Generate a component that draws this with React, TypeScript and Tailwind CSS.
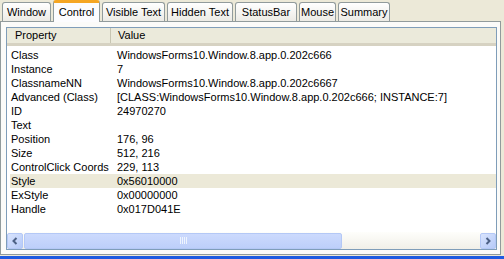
import React from "react";

const tabs: [string, string][] = [
  ["Window", "w-[49px]"],
  ["Control", "w-[47px]"],
  ["Visible Text", "w-[63px]"],
  ["Hidden Text", "w-[66px]"],
  ["StatusBar", "w-[62px]"],
  ["Mouse", "w-[37px]"],
  ["Summary", "w-[52px]"],
];

const rows: [string, string][] = [
  ["Class", "WindowsForms10.Window.8.app.0.202c666"],
  ["Instance", "7"],
  ["ClassnameNN", "WindowsForms10.Window.8.app.0.202c6667"],
  ["Advanced (Class)", "[CLASS:WindowsForms10.Window.8.app.0.202c666; INSTANCE:7]"],
  ["ID", "24970270"],
  ["Text", ""],
  ["Position", "176, 96"],
  ["Size", "512, 216"],
  ["ControlClick Coords", "229, 113"],
  ["Style", "0x56010000"],
  ["ExStyle", "0x00000000"],
  ["Handle", "0x017D041E"],
];

function Arrow({ dir }: { dir: "left" | "right" }) {
  return (
    <div className="w-[16px] h-[16px] rounded-[2px] border border-[#B4C8F6] bg-gradient-to-br from-[#D9E4FD] to-[#B6CAF8] flex items-center justify-center">
      <svg width="8" height="8" viewBox="0 0 8 8" className={dir === "right" ? "rotate-180" : ""}>
        <path d="M5.5 1 L2.5 4 L5.5 7" fill="none" stroke="#4D6185" strokeWidth="2" />
      </svg>
    </div>
  );
}

export default function App() {
  return (
    <div
      className="w-[504px] h-[259px] bg-[#ECE9D8] flex flex-col overflow-hidden text-[11px] text-black"
      style={{ fontFamily: '"Liberation Sans", Arial, sans-serif' }}
    >
      {/* tab strip */}
      <div className="flex items-end h-[21px] pl-[2px] gap-[2px] relative z-10">
        {tabs.map(([t, w]) =>
          t === "Control" ? (
            <div
              key={t}
              className={`${w} h-[22px] -mb-[1px] flex items-center justify-center bg-[#FCFCFE] border border-[#919B9C] border-b-0 border-t-[3px] border-t-[#F5A623] rounded-t-[3px] leading-none whitespace-nowrap`}
            >
              <span className="mt-[-1px]">{t}</span>
            </div>
          ) : (
            <div
              key={t}
              className={`${w} h-[19px] flex items-center justify-center bg-gradient-to-b from-[#FFFFFF] to-[#ECEBE5] border border-[#919B9C] border-b-0 rounded-t-[3px] leading-none whitespace-nowrap`}
            >
              {t}
            </div>
          )
        )}
      </div>

      {/* tab panel */}
      <div className="w-[501px] h-[234px] border border-[#919B9C] bg-[#FBFBF9] pt-[5px] pl-[5px]">
        <div className="w-[491px] h-[223px] border border-[#7F9DB9] bg-white flex flex-col">
          {/* header */}
          <div className="h-[18px] flex bg-[#EBEADB] border-b-[3px] border-b-[#D6D2C2]">
            <div className="w-[104px] pl-[8px] flex items-center border-r border-r-[#C7C5B2]">Property</div>
            <div className="pl-[7px] flex items-center">Value</div>
          </div>
          {/* rows */}
          <div className="flex-1 pt-[2px]">
            {rows.map(([k, v]) => (
              <div
                key={k}
                className={`h-[14px] ml-[3px] flex items-center whitespace-nowrap ${k === "Style" ? "bg-[#ECE9D8]" : ""}`}
              >
                <div className="w-[107px] pl-[1px] shrink-0">{k}</div>
                <div>{v}</div>
              </div>
            ))}
          </div>
          {/* horizontal scrollbar */}
          <div className="h-[17px] flex items-center bg-gradient-to-b from-[#FEFEFB] to-[#F1EFE8] gap-[1px]">
            <Arrow dir="left" />
            <div className="w-[318px] h-[16px] rounded-[2px] border border-[#B4C8F6] bg-gradient-to-b from-[#CCDAFD] to-[#BDCFFA] flex items-center justify-center">
              <div className="flex gap-[1px]">
                {[0, 1, 2, 3].map((i) => (
                  <div key={i} className="w-[1px] h-[7px] bg-[#EEF4FE]" />
                ))}
              </div>
            </div>
            <div className="flex-1" />
            <Arrow dir="right" />
          </div>
        </div>
      </div>

      <div className="flex-1" />
      <div className="h-[3px] bg-[#1E5BE0]" />
    </div>
  );
}
